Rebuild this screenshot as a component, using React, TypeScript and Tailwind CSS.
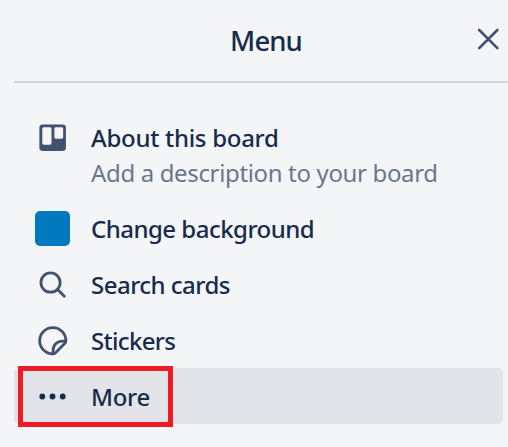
import type { ReactNode } from 'react';

function Icon({ children }: { children: ReactNode }) {
  return (
    <svg className="block size-[35px] shrink-0" viewBox="0 0 24 24" fill="none">
      {children}
    </svg>
  );
}

function BoardIcon() {
  return (
    <Icon>
      <path
        fill="currentColor"
        fillRule="evenodd"
        clipRule="evenodd"
        d="M5 3C3.900 3 3 3.900 3 5v14.200c0 1.100.9 2 2 2h14.200c1.100 0 2-.9 2-2V5c0-1.100-.9-2-2-2H5Zm1 1.900h4.300c.55 0 1 .45 1 1v10.100c0 .55-.45 1-1 1H6c-.55 0-1-.45-1-1V5.900c0-.55.45-1 1-1Zm8.300 0h4c.55 0 1 .45 1 1v6c0 .55-.45 1-1 1h-4c-.55 0-1-.45-1-1v-6c0-.55.45-1 1-1Z"
      />
    </Icon>
  );
}

function SearchIcon() {
  return (
    <Icon>
      <g stroke="currentColor" strokeWidth="1.9" strokeLinecap="round">
        <circle cx="10.650" cy="10.700" r="6.600" />
        <path d="m15.500 15.500 4.600 4.600" />
      </g>
    </Icon>
  );
}

function StickerIcon() {
  return (
    <Icon>
      <g stroke="currentColor" strokeWidth="1.9" strokeLinejoin="round">
        <path d="M21.200 12.200a9 9 0 1 0-9 9c.7 0 1.200-.2 1.700-.7l6.600-6.600c.5-.5.7-1 .7-1.700Z" />
        <path d="M21.100 12.400h-2.300c-3.700 0-6.400 2.700-6.400 6.400v2.300" />
      </g>
    </Icon>
  );
}

function MoreIcon() {
  return (
    <Icon>
      <g fill="currentColor">
        <circle cx="5" cy="12" r="2" />
        <circle cx="12" cy="12" r="2" />
        <circle cx="19" cy="12" r="2" />
      </g>
    </Icon>
  );
}

function MenuItem({ icon, label, className }: { icon: ReactNode; label: string; className: string }) {
  return (
    <button className="flex h-14 w-full items-center gap-[21px] pl-[21px] text-left">
      {icon}
      <span className={`whitespace-nowrap text-[24px] leading-[35px] font-medium text-[#172b4d] ${className}`}>
        {label}
      </span>
    </button>
  );
}

export default function App() {
  return (
    <div className="h-[447px] w-[508px] overflow-hidden bg-[#f4f5f7] pl-[14px] font-['Noto_Sans','Open_Sans',sans-serif] text-[#42526e]">
      <header className="flex h-[83px] items-center border-b-2 border-[#d1d9e0]">
        <h1 className="flex-1 pl-[25px] text-center text-[27.500px] font-medium text-[#172b4d]">
          <span className="tracking-[-0.9px]">Menu</span>
        </h1>
        <button aria-label="Close" className="-ml-[18px] w-[33px] pb-1">
          <svg className="block h-[26px] w-[26px]" viewBox="0 0 26 26" fill="none">
            <path d="m4.200 4 18.200 18.200m0-18.200L4.200 22.200" stroke="currentColor" strokeWidth="2.600" strokeLinecap="round" />
          </svg>
        </button>
      </header>
      <nav className="mr-[5px] pt-[27px]">
        <button className="flex h-[90px] w-full items-start gap-[21px] pt-[10px] pl-[21px] text-left">
          <BoardIcon />
          <span className="flex flex-col whitespace-nowrap text-[24px] leading-[35px]">
            <span className="font-medium tracking-[-0.29px] text-[#172b4d]">About this board</span>
            <span className="tracking-[-0.35px] text-[#6b778c]">Add a description to your board</span>
          </span>
        </button>
        <MenuItem
          icon={<span className="size-[35px] shrink-0 rounded-[5px] bg-[#0079bf]" />}
          label="Change background"
          className="tracking-[-0.52px]"
        />
        <MenuItem icon={<SearchIcon />} label="Search cards" className="tracking-[-0.52px]" />
        <MenuItem icon={<StickerIcon />} label="Stickers" className="tracking-[-0.68px]" />
        <div className="relative rounded-[5px] bg-[#e2e4e9] text-[#172b4d]">
          <MenuItem icon={<MoreIcon />} label="More" className="tracking-[-0.3px]" />
          <div className="pointer-events-none absolute -top-[2px] left-[4px] h-[61px] w-[155px] border-[5px] border-[#ed1c24]" />
        </div>
      </nav>
    </div>
  );
}
